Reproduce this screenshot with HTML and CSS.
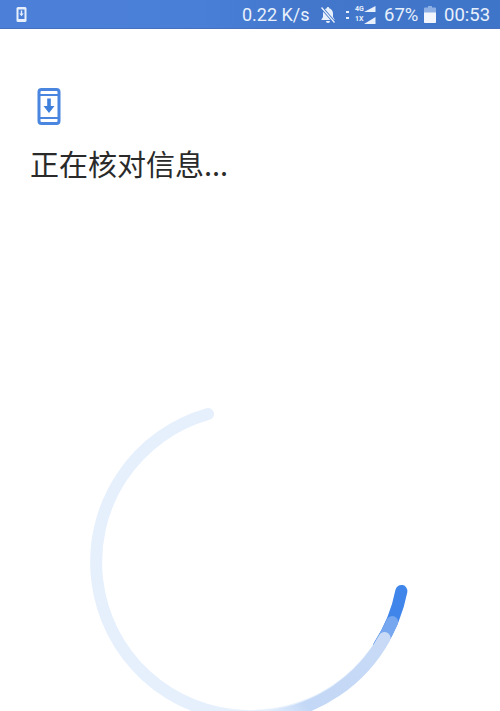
FILE: index.html
```html
<!DOCTYPE html>
<html lang="zh">
<head>
<meta charset="utf-8">
<title>正在核对信息</title>
<link rel="stylesheet" href="styles.css">
</head>
<body>
<div class="page">
  <header class="status">
    <svg class="dl" viewBox="0 0 11 15" width="11" height="15">
      <rect x="0.5" y="0" width="10" height="15" rx="1.5" fill="#e6effb"/>
      <rect x="2.500" y="2.500" width="6" height="9.500" fill="#4a7ed6"/>
      <path d="M4.800 3.500h1.400v3h1.500L5.500 9.200 3.300 6.500h1.500z" fill="#e6effb"/>
    </svg>
    <div class="right">
      <span class="speed">0.22 K/s</span>
      <svg class="bell" viewBox="0 0 16 18" width="16" height="18">
        <path d="M8 1a1.200 1.200 0 0 1 1.200 1.300C11.600 3 13 5 13 7.500V11l1.800 3H1.200L3 11V7.500C3 5 4.400 3 6.800 2.300A1.200 1.200 0 0 1 8 1z" fill="#e8f0fb"/>
        <path d="M6 15h4a2 2 0 0 1-4 0z" fill="#e8f0fb"/>
        <path d="M1.500 1.500l13 15" stroke="#4076ca" stroke-width="3"/>
        <path d="M1.500 1.500l13 15" stroke="#e8f0fb" stroke-width="1.300"/>
      </svg>
      <span class="dots"></span>
      <div class="net">
        <div class="net-labels"><span>4G</span><span>1X</span></div>
        <svg viewBox="0 0 13 18" width="13" height="18">
          <path d="M12.500 0V6H1z M12.500 11V18H1z" fill="#e8f0fb"/>
        </svg>
      </div>
      <span class="pct">67%</span>
      <svg class="batt" viewBox="0 0 12 17" width="12" height="17">
        <path d="M4 0h4v1.500h3a1 1 0 0 1 1 1V16a1 1 0 0 1-1 1H1a1 1 0 0 1-1-1V2.500a1 1 0 0 1 1-1h3z" fill="#8fb0e4"/>
        <path d="M0 6.500h12V16a1 1 0 0 1-1 1H1a1 1 0 0 1-1-1z" fill="#f2f6fc"/>
      </svg>
      <span class="time">00:53</span>
    </div>
  </header>
  <main class="content">
    <svg class="app-icon" viewBox="0 0 24 37" width="24" height="37">
      <rect x="2" y="1.500" width="20" height="34" rx="2.500" fill="none" stroke="#4a86e0" stroke-width="3"/>
      <path d="M2 7h20M2 30h20" stroke="#4a86e0" stroke-width="2.200"/>
      <path d="M10.200 10.500h3.600v7.500h3.700L12 25l-5.500-7h3.700z" fill="#3f7fdc"/>
    </svg>
    <h1 class="title">正在核对信息...</h1>
    <svg class="ring" viewBox="0 0 500 311" width="500" height="311">
      <defs>
        <linearGradient id="fade" gradientUnits="userSpaceOnUse" x1="392" y1="630" x2="270" y2="720">
          <stop offset="0" stop-color="#c8daf6"/>
          <stop offset="0.75" stop-color="#c3d8f6"/>
          <stop offset="1" stop-color="#e6f0fd"/>
        </linearGradient>
      </defs>
      <g transform="translate(0 -400)" fill="none" stroke-width="12">
        <path d="M208 414A154 154 0 1 0 401.400 591" stroke="#e6f0fd" stroke-linecap="round"/>
        <path d="M401.400 591A154 154 0 0 1 379 646" stroke="#3f85ea" stroke-linecap="round"/>
        <path d="M392.200 622A154 154 0 0 1 379 646" stroke="#77a7ee" stroke-linecap="round"/>
        <path d="M384.500 638A154 154 0 0 1 270 716" stroke="url(#fade)" stroke-linecap="round"/>
      </g>
    </svg>
  </main>
</div>
</body>
</html>
```
FILE: styles.css
```css
* { box-sizing: border-box; }
html, body { margin: 0; padding: 0; background: #fff; }
.page {
  width: 500px;
  height: 711px;
  overflow: hidden;
  display: flex;
  flex-direction: column;
  background: #fff;
}
.status {
  height: 29px;
  flex: none;
  display: flex;
  align-items: center;
  justify-content: space-between;
  padding: 1px 9px 0 16px;
  background: linear-gradient(90deg, #4c80d8 0%, #4a7fd8 40%, #4277cc 60%, #3f75c9 100%);
  border-bottom: 1px solid #4672bd;
  color: #e8f0fb;
  font-family: Roboto, "Liberation Sans", sans-serif;
  font-size: 18.500px;
}
.dl { flex: none; }
.right { display: flex; align-items: center; }
.speed { width: 67px; white-space: nowrap; font-size: 18px; }
.bell { margin-left: 11px; }
.dots {
  width: 3px;
  height: 8px;
  margin-left: 10px;
  border-top: 2.500px solid #e8f0fb;
  border-bottom: 2.500px solid #e8f0fb;
}
.net { display: flex; align-items: center; margin-left: 6px; }
.net-labels {
  display: flex;
  flex-direction: column;
  gap: 3px;
  width: 8px;
  font-size: 7px;
  line-height: 7px;
  font-weight: 700;
}
.pct { margin-left: 8px; width: 35px; white-space: nowrap; }
.batt { margin-left: 5px; }
.time { margin-left: 8px; width: 47px; white-space: nowrap; }
.content {
  flex: 1;
  display: flex;
  flex-direction: column;
  align-items: flex-start;
  padding-top: 59px;
}
.app-icon { margin-left: 37px; flex: none; }
.title {
  margin: 18px 0 0 30px;
  font-family: "Noto Sans CJK SC", "Noto Sans", sans-serif;
  font-size: 29px;
  line-height: 40px;
  font-weight: 400;
  color: #2a2a2a;
  white-space: nowrap;
}
.ring { flex: none; margin-top: 217px; display: block; }
```
